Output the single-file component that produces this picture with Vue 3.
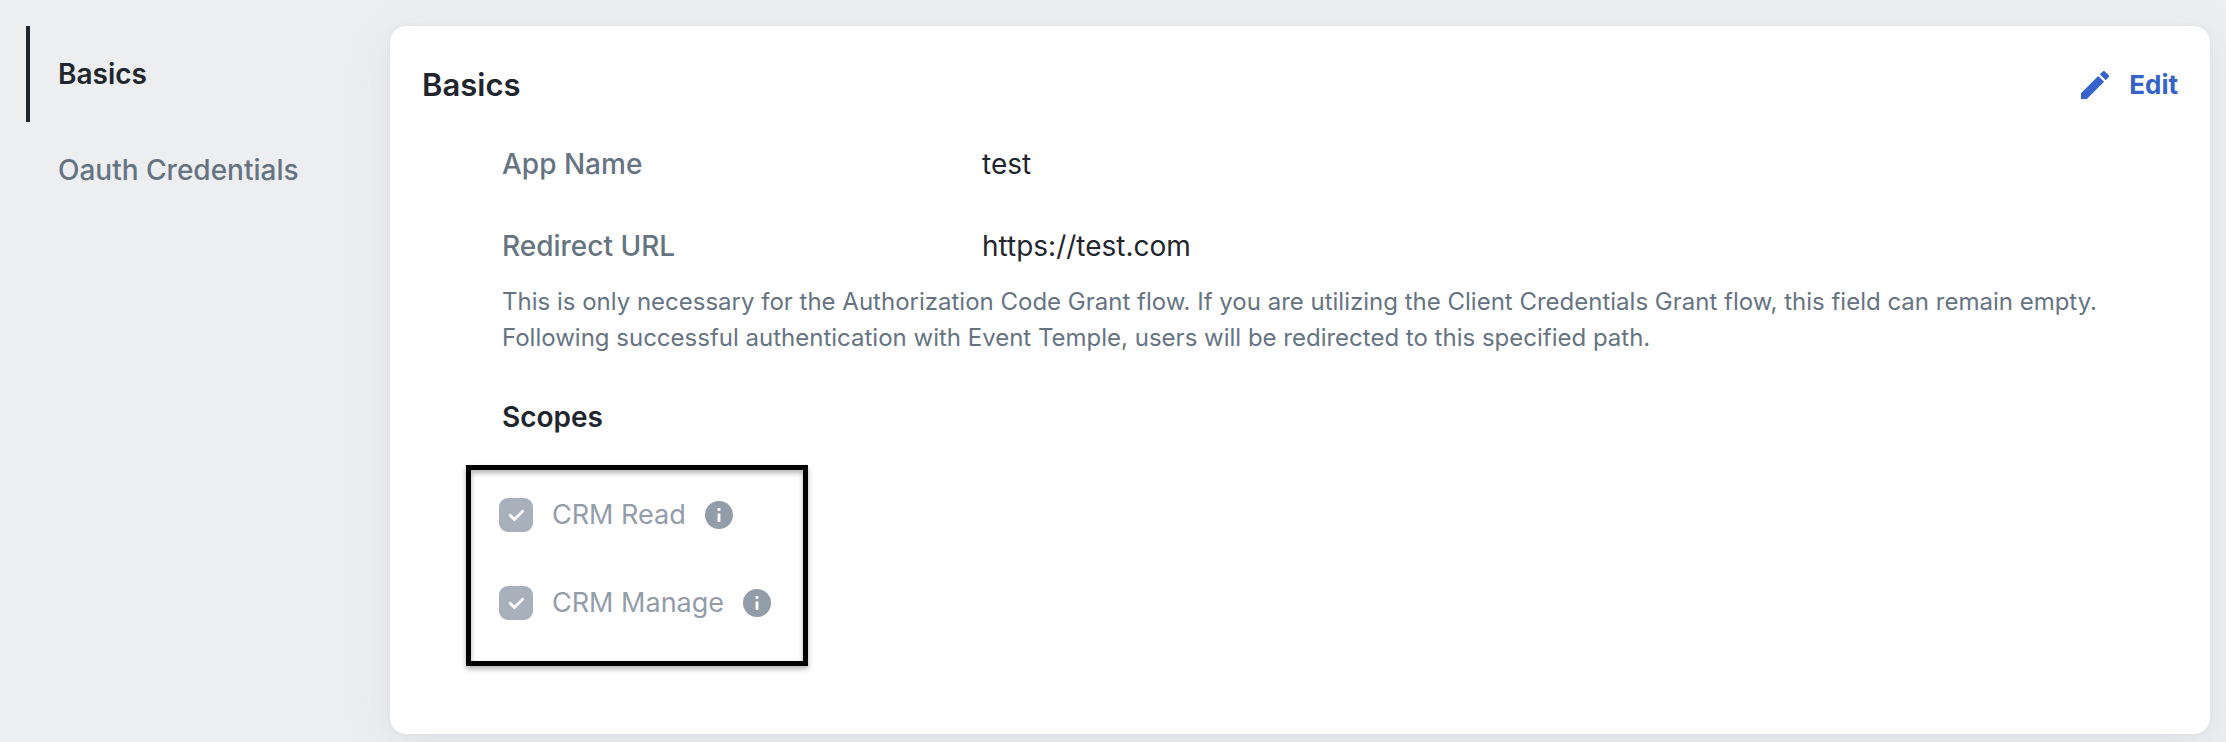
<template>
  <div class="app-page">
    <nav class="side-nav">
      <a
        v-for="link in links"
        :key="link.id"
        :href="'#' + link.id"
        class="side-link"
        :class="{ active: link.id === activeLink }"
        @click.prevent="activeLink = link.id"
      >
        {{ link.label }}
      </a>
    </nav>

    <main class="card">
      <div class="card-header">
        <h2 class="card-title">Basics</h2>
        <button type="button" class="edit-button">
          <svg class="edit-icon" viewBox="3 3 18 18" aria-hidden="true">
            <path
              d="M3 17.25V21h3.75L17.81 9.94l-3.75-3.75L3 17.25zM20.71 7.04a1 1 0 0 0 0-1.41l-2.34-2.34a1 1 0 0 0-1.41 0l-1.83 1.83 3.75 3.75 1.83-1.83z"
            />
          </svg>
          Edit
        </button>
      </div>

      <div class="card-body">
        <dl class="fields">
          <div v-for="field in fields" :key="field.label" class="field">
            <dt class="field-label">{{ field.label }}</dt>
            <dd class="field-value">{{ field.value }}</dd>
          </div>
        </dl>
        <p class="help-text">
          This is only necessary for the Authorization Code Grant flow. If you are utilizing the
          Client Credentials Grant flow, this field can remain empty.<br />
          Following successful authentication with Event Temple, users will be redirected to this
          specified path.
        </p>

        <h3 class="scopes-title">Scopes</h3>
        <div class="scopes">
          <div v-for="scope in scopes" :key="scope.id" class="scope">
            <input
              :id="scope.id"
              v-model="scope.checked"
              type="checkbox"
              class="scope-check"
              disabled
            />
            <label :for="scope.id" class="scope-label">{{ scope.label }}</label>
            <svg class="info-icon" viewBox="0 0 28 28" aria-hidden="true">
              <circle cx="14" cy="14" r="14" />
              <path d="M12.6 7h2.8v2.8h-2.8zM12.6 12.6h2.8V21h-2.8z" fill="#fff" />
            </svg>
          </div>
        </div>
      </div>
    </main>
  </div>
</template>

<script setup>
import { ref, reactive } from "vue";

const activeLink = ref("basics");

const links = [
  { id: "basics", label: "Basics" },
  { id: "oauth-credentials", label: "Oauth Credentials" },
];

const fields = [
  { label: "App Name", value: "test" },
  { label: "Redirect URL", value: "https://test.com" },
];

const scopes = reactive([
  { id: "crm-read", label: "CRM Read", checked: true },
  { id: "crm-manage", label: "CRM Manage", checked: true },
]);
</script>

<style>
body {
  background-color: #edeef0;
}
</style>

<style scoped>
.app-page {
  display: flex;
  align-items: flex-start;
  gap: 32px;
  padding: 26px 16px 8px 26px;
  font-family: Inter, "Liberation Sans", sans-serif;
  font-size: 28px;
  line-height: 40px;
  color: #1f262e;
}

.side-nav {
  display: flex;
  flex-direction: column;
  flex: 0 0 332px;
}

.side-link {
  padding: 28px;
  border-left: 4px solid transparent;
  color: #667482;
  font-weight: 500;
  text-decoration: none;
}

.side-link.active {
  border-left-color: #1f262e;
  color: #1f262e;
  font-weight: 600;
}

.card {
  flex: 1;
  min-width: 0;
  padding: 39px 32px 68px;
  border-radius: 16px;
  background-color: #fff;
  box-shadow: 0 12px 48px rgba(100, 120, 150, 0.1), 0 0 4px rgba(100, 120, 150, 0.1);
}

.card-header {
  display: flex;
  justify-content: space-between;
  align-items: center;
}

.card-title {
  margin: 0;
  font-size: 31px;
  font-weight: 600;
}

.edit-button {
  display: flex;
  align-items: center;
  gap: 20px;
  padding: 0;
  border: none;
  background: none;
  color: #3563cb;
  font: inherit;
  font-size: 26px;
  font-weight: 700;
  cursor: pointer;
}

.edit-icon {
  width: 28px;
  height: 28px;
  fill: currentColor;
}

.card-body {
  padding: 39px 44px 0 80px;
}

.fields {
  display: flex;
  flex-direction: column;
  gap: 42px;
  margin: 0;
}

.field {
  display: flex;
}

.field-label {
  flex: 0 0 480px;
  color: #667482;
  font-weight: 500;
}

.field-value {
  margin: 0;
}

.help-text {
  margin: 18px 0 41px;
  color: #667482;
  font-size: 24px;
  line-height: 36px;
}

.scopes-title {
  margin: 0;
  font-size: 28px;
  font-weight: 600;
}

.scopes {
  display: flex;
  flex-direction: column;
  gap: 48px;
  width: fit-content;
  margin: 28px 0 0 -36px;
  padding: 25px 32px 38px 28px;
  border: 5px solid #000;
  box-shadow: 0 3px 5px rgba(0, 0, 0, 0.3), inset 0 3px 5px rgba(0, 0, 0, 0.3);
}

.scope {
  display: flex;
  align-items: center;
  gap: 19px;
}

.scope-check {
  appearance: none;
  width: 34px;
  height: 34px;
  margin: 0;
  border-radius: 9px;
  background-color: #a8b0bb;
}

.scope-check:checked {
  background-image: url("data:image/svg+xml,%3Csvg xmlns='http://www.w3.org/2000/svg' viewBox='0 0 34 34'%3E%3Cpath d='M11.2 17.3l4.2 4.2 8.2-8.2' fill='none' stroke='%23fff' stroke-width='2.8' stroke-linecap='round'/%3E%3C/svg%3E");
}

.scope-label {
  color: #939daa;
  font-size: 27px;
}

.info-icon {
  width: 28px;
  height: 28px;
  fill: #939daa;
}
</style>
